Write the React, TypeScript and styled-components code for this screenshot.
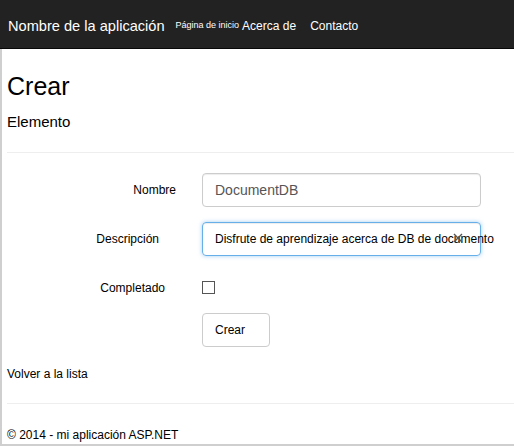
import styled, { createGlobalStyle } from 'styled-components'

const GlobalStyle = createGlobalStyle`
  html, body {
    margin: 0;
    padding: 0;
    background: #fff;
    font-family: 'Liberation Sans', Arial, sans-serif;
    color: #000;
  }
`

const Page = styled.div`
  width: 514px;
  height: 447px;
  overflow: hidden;
`

const Navbar = styled.nav`
  height: 48px;
  background: #222;
  border-bottom: 1px solid #080808;
  display: flex;
  align-items: flex-start;
  padding-left: 8px;
  color: #fff;
`

const Brand = styled.span`
  font-size: 14.6px;
  line-height: 16px;
  padding-top: 18px;
  white-space: nowrap;
`

const NavLink = styled.span<{ $size: number; $top: number; $ml: number }>`
  font-size: ${(p) => p.$size}px;
  line-height: ${(p) => Math.round(p.$size) + 1}px;
  padding-top: ${(p) => p.$top}px;
  margin-left: ${(p) => p.$ml}px;
  white-space: nowrap;
`

const Frame = styled.main`
  width: 510px;
  height: 395px;
  border-left: 2px solid #cfcfcf;
  border-right: 1px solid #cfcfcf;
  border-bottom: 2px solid #cfcfcf;
  padding-left: 5px;
  box-sizing: content-box;
  display: flex;
  flex-direction: column;
  overflow: hidden;
`

const Title = styled.h2`
  margin: 22px 0 0;
  font-size: 25px;
  line-height: 30px;
  font-weight: 400;
`

const Subtitle = styled.h4`
  margin: 11px 0 0;
  font-size: 15px;
  line-height: 20px;
  font-weight: 400;
`

const Rule = styled.hr<{ $mt: number }>`
  margin: ${(p) => p.$mt}px 0 0;
  border: 0;
  border-top: 1px solid #eee;
  height: 0;
  flex-shrink: 0;
`

const Form = styled.form`
  display: grid;
  grid-template-columns: 169px 279px;
  column-gap: 26px;
  margin-top: 20px;
`

const Row = styled.div<{ $mt: number }>`
  display: contents;
  & > * {
    margin-top: ${(p) => p.$mt}px;
  }
`

const Label = styled.label<{ $inset: number; $h: number }>`
  font-size: 12px;
  text-align: right;
  padding-right: ${(p) => p.$inset}px;
  height: ${(p) => p.$h}px;
  display: flex;
  align-items: center;
  justify-content: flex-end;
  white-space: nowrap;
`

const TextBox = styled.div<{ $focused?: boolean }>`
  position: relative;
  box-sizing: border-box;
  height: 34px;
  padding: 0 12px;
  display: flex;
  align-items: center;
  border: 1px solid ${(p) => (p.$focused ? '#66afe9' : '#ccc')};
  border-radius: 4px;
  box-shadow: ${(p) =>
    p.$focused
      ? 'inset 0 1px 1px rgba(0,0,0,.075), 0 0 4px rgba(102,175,233,.6)'
      : 'inset 0 1px 1px rgba(0,0,0,.075)'};
  font-size: ${(p) => (p.$focused ? 12 : 14)}px;
  color: ${(p) => (p.$focused ? '#000' : '#555')};
  white-space: nowrap;
  overflow: visible;
`

const ClearIcon = styled.svg`
  position: absolute;
  right: 17px;
  top: 10px;
`

const CheckCell = styled.div`
  height: 26px;
  display: flex;
  align-items: center;
`

const Checkbox = styled.span`
  width: 11px;
  height: 11px;
  border: 1px solid #555;
  background: #fff;
  margin-top: -2px;
`

const Button = styled.button`
  grid-column: 2;
  justify-self: start;
  width: 68px;
  height: 34px;
  box-sizing: border-box;
  border: 1px solid #ccc;
  border-radius: 4px;
  background: #fff;
  font-family: 'Liberation Sans', Arial, sans-serif;
  font-size: 12px;
  color: #000;
  text-align: left;
  padding: 0 12px;
  margin-top: 12px;
`

const BackLink = styled.a`
  margin-top: 20px;
  font-size: 12px;
  line-height: 14px;
  color: #000;
  text-decoration: none;
`

const Footer = styled.footer`
  margin-top: 24px;
  font-size: 12px;
  line-height: 14px;
`

export default function App() {
  return (
    <Page>
      <GlobalStyle />
      <Navbar>
        <Brand>Nombre de la aplicación</Brand>
        <NavLink $size={9} $top={20} $ml={11}>
          Página de inicio
        </NavLink>
        <NavLink $size={12} $top={20} $ml={3}>
          Acerca de
        </NavLink>
        <NavLink $size={12} $top={20} $ml={14}>
          Contacto
        </NavLink>
      </Navbar>
      <Frame>
        <Title>Crear</Title>
        <Subtitle>Elemento</Subtitle>
        <Rule $mt={20} />
        <Form>
          <Row $mt={0}>
            <Label $inset={0} $h={34}>Nombre</Label>
            <TextBox>DocumentDB</TextBox>
          </Row>
          <Row $mt={15}>
            <Label $inset={17} $h={34}>Descripción</Label>
            <TextBox $focused>
              Disfrute de aprendizaje acerca de DB de documento
              <ClearIcon width="10" height="10" viewBox="0 0 10 10">
                <path d="M1 1 L9 9 M9 1 L1 9" stroke="#555" strokeWidth="1.4" fill="none" />
              </ClearIcon>
            </TextBox>
          </Row>
          <Row $mt={19}>
            <Label $inset={11} $h={26}>Completado</Label>
            <CheckCell>
              <Checkbox />
            </CheckCell>
          </Row>
          <Button type="button">Crear</Button>
        </Form>
        <BackLink href="#">Volver a la lista</BackLink>
        <Rule $mt={22} />
        <Footer>© 2014 - mi aplicación ASP.NET</Footer>
      </Frame>
    </Page>
  )
}
